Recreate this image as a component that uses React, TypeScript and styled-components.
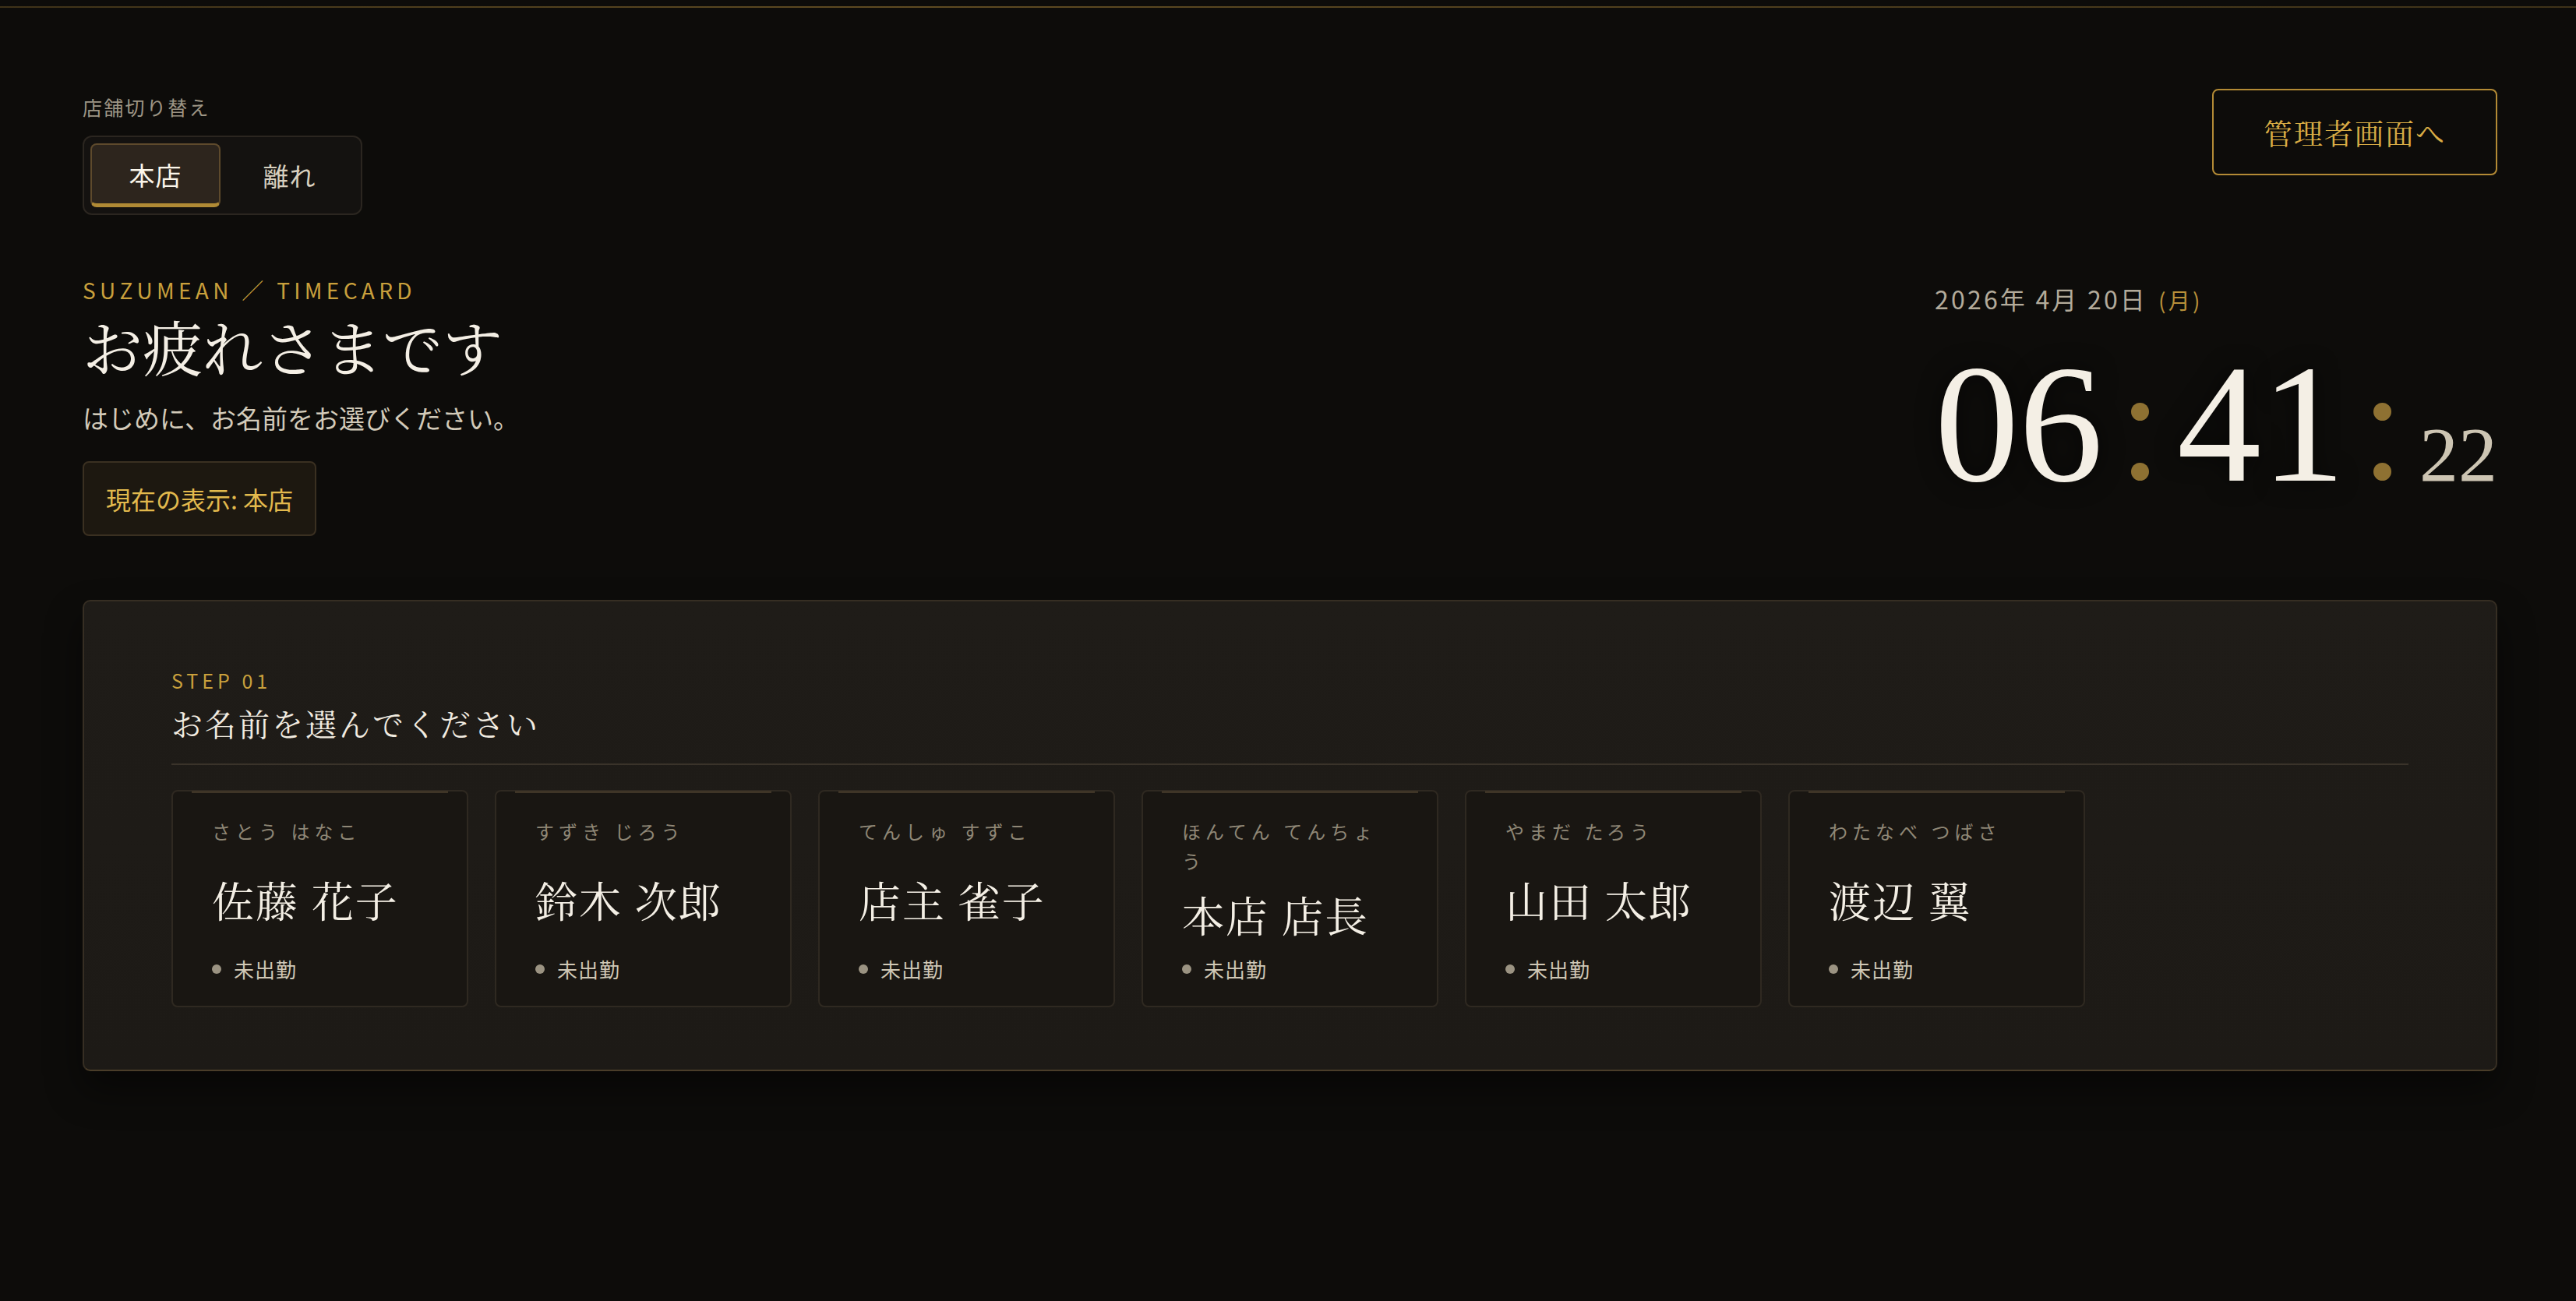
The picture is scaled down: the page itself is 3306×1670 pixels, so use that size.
import styled, { createGlobalStyle } from 'styled-components';

const SERIF = `"Noto Serif CJK JP", "Liberation Serif", "Noto Sans CJK JP", serif`;
const SANS = `"Noto Sans CJK JP", "Noto Sans", sans-serif`;

interface IStaff {
  id: number;
  kana: string;
  name: string;
}

const staffList: IStaff[] = [
  { id: 1, kana: 'さとう はなこ', name: '佐藤 花子' },
  { id: 2, kana: 'すずき じろう', name: '鈴木 次郎' },
  { id: 3, kana: 'てんしゅ すずこ', name: '店主 雀子' },
  { id: 4, kana: 'ほんてん てんちょう', name: '本店 店長' },
  { id: 5, kana: 'やまだ たろう', name: '山田 太郎' },
  { id: 6, kana: 'わたなべ つばさ', name: '渡辺 翼' },
];

const stores = ['本店', '離れ'];

const App = () => {
  const current = '本店';

  return (
    <Page>
      <GlobalStyle />
      <TopRule />
      <Main>
        <TopBar>
          <StoreSwitch>
            <SwitchLabel>店舗切り替え</SwitchLabel>
            <SwitchGroup>
              {stores.map(s => (
                <SwitchButton key={s} $active={s === current}>
                  {s}
                </SwitchButton>
              ))}
            </SwitchGroup>
          </StoreSwitch>
          <AdminButton>管理者画面へ</AdminButton>
        </TopBar>

        <Hero>
          <Greeting>
            <Eyebrow>SUZUMEAN ／ TIMECARD</Eyebrow>
            <Title>お疲れさまです</Title>
            <Lead>はじめに、お名前をお選びください。</Lead>
            <CurrentBadge>現在の表示: {current}</CurrentBadge>
          </Greeting>
          <ClockBlock>
            <DateLine>
              2026年 4月 20日<Weekday>(月)</Weekday>
            </DateLine>
            <Clock>
              <Digits>06</Digits>
              <Colon>
                <Dot />
                <Dot />
              </Colon>
              <Digits>41</Digits>
              <Colon>
                <Dot />
                <Dot />
              </Colon>
              <Seconds>22</Seconds>
            </Clock>
          </ClockBlock>
        </Hero>

        <Panel>
          <StepLabel>STEP 01</StepLabel>
          <StepTitle>お名前を選んでください</StepTitle>
          <StaffGrid>
            {staffList.map(staff => (
              <StaffCard key={staff.id}>
                <Kana>{staff.kana}</Kana>
                <StaffName>{staff.name}</StaffName>
                <Status>
                  <StatusDot />
                  未出勤
                </Status>
              </StaffCard>
            ))}
          </StaffGrid>
        </Panel>
      </Main>
    </Page>
  );
};

const GlobalStyle = createGlobalStyle`
  html, body {
    margin: 0;
    padding: 0;
    background: #0d0c0a;
  }
  body {
    font-family: ${SANS};
    color: #f2ede3;
  }
  * {
    box-sizing: border-box;
  }
`;

const Page = styled.div`
  min-height: 100vh;
  background: #0d0c0a;
`;

const TopRule = styled.div`
  height: 2px;
  margin-top: 8px;
  background: linear-gradient(
    90deg,
    rgba(176, 138, 58, 0.3),
    rgba(176, 138, 58, 0.5) 35%,
    rgba(176, 138, 58, 0.3)
  );
`;

const Main = styled.main`
  padding: 104px 101px 120px 106px;
`;

const TopBar = styled.div`
  display: flex;
  justify-content: space-between;
  align-items: flex-start;
`;

const StoreSwitch = styled.div`
  padding-top: 5px;
`;

const SwitchLabel = styled.div`
  font-size: 25px;
  letter-spacing: 2.3px;
  line-height: 36px;
  color: #9d9585;
  margin-bottom: 19px;
`;

const SwitchGroup = styled.div`
  display: inline-flex;
  gap: 5px;
  padding: 8px;
  border: 2px solid #2b2620;
  border-radius: 12px;
  background: #141210;
`;

const SwitchButton = styled.button<{ $active?: boolean }>`
  width: 167px;
  height: 82px;
  display: flex;
  align-items: center;
  justify-content: center;
  font-family: ${SANS};
  font-size: 33px;
  letter-spacing: 1px;
  border-radius: 8px;
  cursor: pointer;
  border: 2px solid ${({ $active }) => ($active ? '#5e4a2c' : 'transparent')};
  border-bottom: ${({ $active }) => ($active ? '5px solid #b08a35' : '2px solid transparent')};
  background: ${({ $active }) => ($active ? '#2d251d' : 'transparent')};
  color: ${({ $active }) => ($active ? '#fbf6ea' : '#d8d0bf')};
`;

const AdminButton = styled.button`
  height: 111px;
  padding: 0 64px;
  border: 2px solid #b38a35;
  border-radius: 8px;
  background: transparent;
  font-family: ${SERIF};
  font-size: 37px;
  letter-spacing: 2px;
  color: #d9ac45;
  cursor: pointer;
`;

const Hero = styled.section`
  display: flex;
  justify-content: space-between;
  align-items: flex-start;
  margin-top: 77px;
`;

const Greeting = styled.div`
  display: flex;
  flex-direction: column;
  align-items: flex-start;
`;

const Eyebrow = styled.div`
  font-size: 28px;
  letter-spacing: 0.19em;
  line-height: 39px;
  color: #c9a03c;
`;

const Title = styled.h1`
  margin: 2px 0 0;
  font-family: ${SERIF};
  font-size: 77px;
  font-weight: 400;
  line-height: 1.3;
  color: #f4efe5;
`;

const Lead = styled.p`
  margin: 18px 0 0;
  font-size: 33px;
  line-height: 48px;
  color: #d2cab9;
`;

const CurrentBadge = styled.div`
  margin-top: 32px;
  padding: 22px 28px;
  line-height: 48px;
  font-size: 32px;
  color: #e2b94d;
  background: #1d1810;
  border: 2px solid #3a3021;
  border-radius: 8px;
`;

const ClockBlock = styled.div`
  padding-top: 8px;
  display: flex;
  flex-direction: column;
  align-items: flex-start;
`;

const DateLine = styled.div`
  font-size: 32px;
  line-height: 45px;
  letter-spacing: 0.1em;
  color: #b3ab9b;
`;

const Weekday = styled.span`
  margin-left: 14px;
  font-size: 28px;
  color: #b8903a;
`;

const Clock = styled.div`
  display: flex;
  align-items: baseline;
  margin-top: 29px;
  font-family: "Liberation Serif", "DejaVu Serif", serif;
`;

const Digits = styled.span`
  font-size: 216px;
  line-height: 1;
  font-weight: 400;
  color: #f4efe5;
  text-shadow: 0 0 30px rgba(0, 0, 0, 0.6);
`;

const Seconds = styled.span`
  font-size: 100px;
  line-height: 1;
  color: #cdc5b3;
`;

const Colon = styled.span`
  display: block;
  height: 100px;
  margin: 0 36px;
`;

const Dot = styled.span`
  display: block;
  width: 23px;
  height: 23px;
  border-radius: 50%;
  background: #8e7132;

  & + & {
    margin-top: 54px;
  }
`;

const Panel = styled.section`
  margin-top: 82px;
  padding: 84px 112px 80px;
  border: 2px solid #362e23;
  border-bottom-color: #4a3d29;
  border-radius: 10px;
  background: linear-gradient(180deg, #1f1c18, #1d1a16);
  box-shadow: 0 24px 48px rgba(0, 0, 0, 0.45);
`;

const StepLabel = styled.div`
  font-size: 25px;
  letter-spacing: 0.2em;
  line-height: 35px;
  color: #c9a03c;
`;

const StepTitle = styled.h2`
  margin: 9px 0 0;
  padding-bottom: 24px;
  border-bottom: 2px solid #3a332a;
  font-family: ${SERIF};
  font-size: 40px;
  font-weight: 400;
  letter-spacing: 3px;
  line-height: 56px;
  color: #f1ebe0;
`;

const StaffGrid = styled.div`
  margin-top: 32px;
  display: grid;
  grid-template-columns: repeat(auto-fill, minmax(370px, 1fr));
  gap: 34px;
`;

const StaffCard = styled.button`
  position: relative;
  min-height: 279px;
  padding: 32px 50px 28px;
  display: flex;
  flex-direction: column;
  justify-content: space-between;
  align-items: flex-start;
  text-align: left;
  border: 2px solid #2f2921;
  border-radius: 8px;
  background: #191612;
  font-family: ${SANS};
  cursor: pointer;

  &::before {
    content: '';
    position: absolute;
    top: -1px;
    left: 24px;
    right: 24px;
    height: 3px;
    background: #3f3527;
  }
`;

const Kana = styled.div`
  font-size: 24px;
  letter-spacing: 6px;
  line-height: 38px;
  color: #8f8776;
`;

const StaffName = styled.div`
  font-family: ${SERIF};
  font-size: 54px;
  letter-spacing: 2px;
  line-height: 70px;
  color: #f4efe5;
`;

const Status = styled.div`
  display: flex;
  align-items: center;
  gap: 16px;
  font-size: 26px;
  letter-spacing: 1px;
  line-height: 39px;
  color: #cfc7b5;
`;

const StatusDot = styled.span`
  width: 12px;
  height: 12px;
  border-radius: 50%;
  background: #9b9382;
`;

export default App;
